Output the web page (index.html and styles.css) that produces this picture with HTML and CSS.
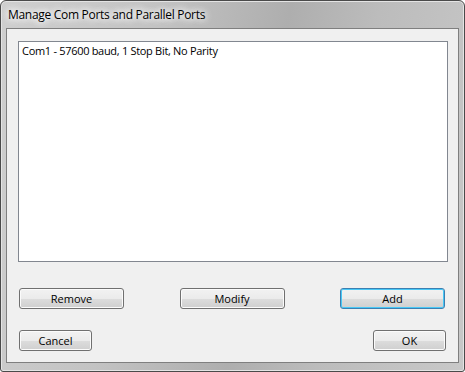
FILE: index.html
```html
<!DOCTYPE html>
<html lang="en">
<head>
    <meta charset="UTF-8">
    <title>Manage Com Ports and Parallel Ports</title>
    <link rel="stylesheet" href="styles.css">
</head>
<body>
    <div class="window">
        <div class="titlebar">
            <span class="title">Manage Com Ports and Parallel Ports</span>
        </div>
        <div class="client">
            <div class="listbox">
                <div class="item">Com1 - 57600 baud, 1 Stop Bit, No Parity</div>
            </div>
            <div class="row row-actions">
                <button class="btn btn-wide" type="button">Remove</button>
                <button class="btn btn-wide" type="button">Modify</button>
                <button class="btn btn-wide btn-default" type="button">Add</button>
            </div>
            <div class="row row-dialog">
                <button class="btn btn-small" type="button">Cancel</button>
                <button class="btn btn-small" type="button">OK</button>
            </div>
        </div>
    </div>
</body>
</html>
```

FILE: styles.css
```css
body {
    margin: 0;
    padding: 0;
    background-color: #ffffff;
    font-family: "Open Sans", "Noto Sans", sans-serif;
    font-size: 12px;
    color: #000000;
}

.window {
    width: 465px;
    height: 372px;
    box-sizing: border-box;
    border: 1px solid #4a4a4a;
    border-radius: 6px 6px 3px 3px;
    padding: 0 5px 8px 5px;
    display: flex;
    flex-direction: column;
    background: linear-gradient(100deg, #cfcfcf 0%, #c3c3c3 30%, #aeaeae 55%, #bcbcbc 72%, #c8c8c8 100%);
    box-shadow: inset 0 0 0 1px #e4e4e4;
}

.titlebar {
    height: 27px;
    display: flex;
    align-items: center;
    padding-left: 2px;
}

.title {
    font-size: 12px;
    letter-spacing: -0.3px;
    text-shadow: 0 0 6px #ffffff, 0 0 8px #ffffff, 0 0 10px #ffffff;
}

.client {
    flex: 1;
    background-color: #f0f0f0;
    border: 1px solid #7f7f7f;
    display: flex;
    flex-direction: column;
    padding: 12px 10px 0 11px;
}

.listbox {
    height: 221px;
    box-sizing: border-box;
    background-color: #ffffff;
    border: 1px solid #828790;
    padding: 1px 3px;
}

.item {
    line-height: 15px;
    font-size: 11px;
    letter-spacing: -0.3px;
}

.row {
    display: flex;
    justify-content: space-between;
    padding: 0 0 0 1px;
}

.row-actions {
    margin-top: 26px;
    padding-right: 3px;
}

.row-dialog {
    margin-top: 21px;
    padding-right: 2px;
}

.btn {
    height: 21px;
    box-sizing: border-box;
    border: 1px solid #707070;
    border-radius: 3px;
    background: linear-gradient(#f2f2f2 0%, #ebebeb 50%, #dddddd 50%, #cfcfcf 100%);
    box-shadow: inset 0 0 0 1px #fbfbfb;
    font-family: "Open Sans", "Noto Sans", sans-serif;
    font-size: 11px;
    color: #000000;
    padding: 0;
}

.btn-wide {
    width: 105px;
}

.btn-small {
    width: 73px;
}

.btn-default {
    border-color: #3c7fb1;
    box-shadow: inset 0 0 0 1px #48c8f6;
}
```
